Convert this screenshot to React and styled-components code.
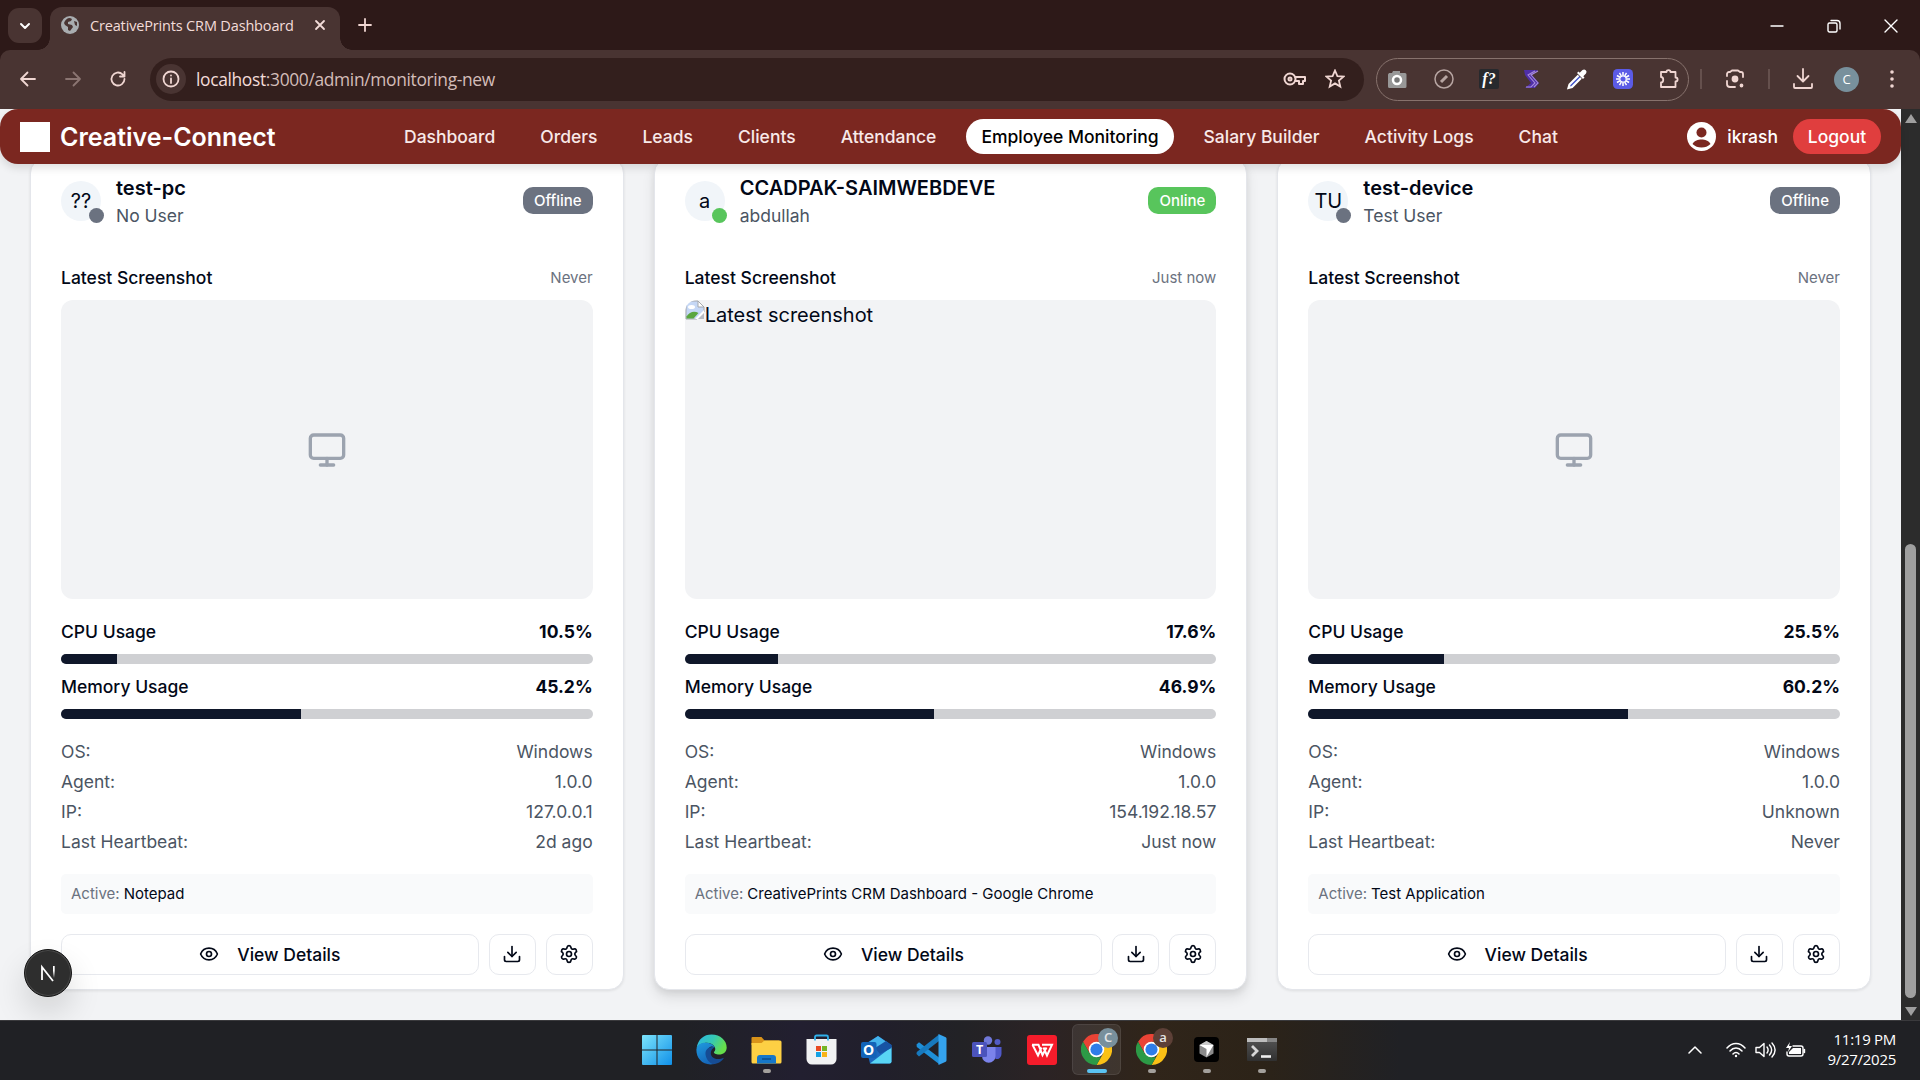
import React from 'react';
import styled, { createGlobalStyle } from 'styled-components';
import { Eye, Download, Settings, Monitor } from 'lucide-react';

const Global = createGlobalStyle`
  * { box-sizing: border-box; }
  html, body { margin: 0; padding: 0; overflow: hidden; background: #202125; }
  body { font-family: Inter, "Noto Sans", sans-serif; }
  svg { display: block; flex: none; }
`;

const Screen = styled.div`
  width: 1920px; height: 1080px; display: flex; flex-direction: column; overflow: hidden;
`;

/* ---------- browser chrome ---------- */
const TabStrip = styled.div`
  height: 50px; background: #2d1918; display: flex; align-items: flex-end; padding-left: 8px;
  font-family: "Open Sans", "Noto Sans", sans-serif;
`;
const TabSearch = styled.div`
  width: 34px; height: 35px; margin-bottom: 7px; border-radius: 11px; background: #493432;
  display: flex; align-items: center; justify-content: center;
`;
const Tab = styled.div`
  position: relative; width: 290px; height: 43px; margin-left: 8px; border-radius: 12px 12px 0 0; background: #493432;
  display: flex; align-items: center; padding: 0 14px 7px 11px;
  &::before, &::after {
    content: ""; position: absolute; bottom: 0; width: 12px; height: 12px;
  }
  &::before { left: -12px; background: radial-gradient(circle at 0 0, transparent 11.5px, #493432 12px); }
  &::after { right: -12px; background: radial-gradient(circle at 100% 0, transparent 11.5px, #493432 12px); }
`;
const TabTitle = styled.span`
  flex: 1; margin-left: 11px; font-size: 14.5px; letter-spacing: -0.16px; color: #f3dcd9; white-space: nowrap; padding-top: 1px;
`;
const NewTab = styled.div`
  height: 50px; display: flex; align-items: center; margin-left: 18px;
`;
const WindowButtons = styled.div`
  margin-left: auto; height: 49px; display: flex; align-items: center; gap: 43px; padding-right: 22px;
`;
const Toolbar = styled.div`
  height: 59px; background: #493432; border-radius: 10px 10px 0 0; display: flex; align-items: center; padding: 0 13px 1px 18px;
  font-family: "Open Sans", "Noto Sans", sans-serif;
`;
const ToolbarWrap = styled.div`
  background: #2d1918;
`;
const NavIcons = styled.div`
  display: flex; gap: 25px; width: 132px;
`;
const Address = styled.div`
  width: 1214px; height: 43px; border-radius: 22px; background: #331f1d; display: flex; align-items: center; padding: 0 19px 0 6px;
`;
const SiteInfo = styled.div`
  width: 30px; height: 30px; border-radius: 50%; background: #493432; display: flex; align-items: center; justify-content: center;
`;
const Url = styled.div`
  flex: 1; margin-left: 10px; font-size: 17.4px; letter-spacing: -0.34px; color: #d3bdb9; white-space: nowrap; padding-bottom: 1px;
  b { font-weight: 400; color: #f3dcd9; }
`;
const AddressIcons = styled.div`display: flex; gap: 18px; align-items: center;`;
const Extensions = styled.div`
  width: 313px; height: 43px; margin-left: 12px; border: 1.5px solid #87726d; border-radius: 22px;
  display: flex; align-items: center; justify-content: space-between; padding: 0 8px 0 8px;
`;
const Divider = styled.div`
  width: 2px; height: 20px; background: #65504d; margin: 0 ${p => p.$r}px 0 ${p => p.$l}px;
`;
const Profile = styled.div`
  width: 25px; height: 25px; margin: 0 30px 0 20px; border-radius: 50%; background: #78909c; color: #fff;
  display: flex; align-items: center; justify-content: center; font-size: 13px;
`;

/* ---------- page ---------- */
const Viewport = styled.div`
  height: 911px; display: flex; background: #f2f3f5; overflow: hidden; position: relative;
`;
const Page = styled.div`
  width: 1901px; display: flex; flex-direction: column;
`;
const Header = styled.header`
  position: relative; z-index: 2; flex: none; height: 55px; background: #7b2720; border-radius: 18px;
  box-shadow: 0 4px 8px rgba(0,0,0,.12); display: flex; align-items: center; padding: 0 20px;
`;
const Logo = styled.div`width: 30px; height: 30px; background: #fff;`;
const Brand = styled.div`
  margin-left: 10px; width: 329px; font-size: 25px; font-weight: 600; color: #fff; white-space: nowrap;
`;
const Menu = styled.nav`display: flex; gap: 15px;`;
const MenuItem = styled.a`
  height: 35px; padding: 0 15px; border-radius: 18px; display: flex; align-items: center; font-size: 17.5px; font-weight: 500;
  white-space: nowrap; background: ${p => (p.$active ? '#fff' : 'transparent')}; color: ${p => (p.$active ? '#000' : '#f8e9e8')};
`;
const UserName = styled.span`margin: 0 15px 0 11px; color: #fff; font-size: 17.5px; font-weight: 500;`;
const UserArea = styled.div`margin-left: auto; display: flex; align-items: center;`;
const Logout = styled.button`
  border: 0; height: 35px; width: 88px; border-radius: 18px; background: #e03e3e; color: #fff; font: 500 17.5px Inter, sans-serif; padding: 0;
`;
const Cards = styled.main`
  display: grid; grid-template-columns: repeat(3, 593.67px); gap: 30px; padding: 0 0 0 30px; margin-top: -6px;
`;
const Card = styled.section`
  height: 832px; background: #fff; border: 1px solid #e4e6eb; border-radius: 15px; padding: 14px 30px 0;
  box-shadow: ${p => (p.$raised ? '0 8px 14px rgba(0,0,0,.09), 0 3px 6px rgba(0,0,0,.07)' : '0 1px 3px rgba(0,0,0,.09)')};
`;
const CardHead = styled.div`display: flex; align-items: center; height: 55px;`;
const Avatar = styled.div`
  position: relative; width: 40px; height: 40px; border-radius: 50%; background: #f1f5f9; color: #020817;
  display: flex; align-items: center; justify-content: center; font-size: 20px;
`;
const StatusDot = styled.i`
  position: absolute; right: -2.5px; bottom: -2.5px; width: 15px; height: 15px; border-radius: 50%;
  background: ${p => (p.$online ? '#58c55c' : '#6b7280')};
`;
const Names = styled.div`flex: 1; margin-left: 15px;`;
const Device = styled.div`font-size: 20px; font-weight: 600; line-height: 30px; color: #020817;`;
const Owner = styled.div`font-size: 17.5px; line-height: 25px; color: #4b5563;`;
const Badge = styled.div`
  height: 27px; padding: 0 11px; border-radius: 10px; display: flex; align-items: center; font-size: 15px; font-weight: 500;
  color: #fff; background: ${p => (p.$online ? '#58c55c' : '#6b7280')};
`;
const Line = styled.div`
  display: flex; justify-content: space-between; align-items: center; height: 25px; font-size: 17.5px;
  font-weight: 500; color: #020817;
`;
const ShotHead = styled(Line)`margin-top: 37.4px;`;
const Ago = styled.span`font-size: 15px; font-weight: 400; color: #6b7280;`;
const Shot = styled.div`
  height: 298.6px; margin-top: 10px; border-radius: 12px; background: #f2f3f5; overflow: hidden; display: flex;
  align-items: ${p => (p.$empty ? 'center' : 'flex-start')}; justify-content: ${p => (p.$empty ? 'center' : 'flex-start')};
  font-size: 20px; line-height: 30px; color: #020817;
`;
const Metrics = styled.div`margin-top: 20px;`;
const Strong = styled.span`font-weight: 700;`;
const Track = styled.div`
  height: 10px; margin: 10px 0; border-radius: 5px; background: #cfd0d3; overflow: hidden;
`;
const Fill = styled.div`height: 10px; background: #0f172a;`;
const Facts = styled.div`margin-top: 17.5px; height: 120px;`;
const Fact = styled(Line)`height: 30px; font-weight: 400; color: #4b5563;`;
const Active = styled.div`
  height: 40px; margin-top: 17.5px; padding: 0 10px; border-radius: 5px; background: #f9fafb; display: flex; align-items: center;
  gap: 4px; font-size: 15px; color: #6b7280;
  span { color: #020817; }
`;
const Actions = styled.div`display: flex; gap: 10px; margin-top: 20px; color: #020817;`;
const Button = styled.button`
  flex: ${p => (p.$wide ? '1' : '0 0 47px')}; height: 41px; border: 1.5px solid #e7e9ee; border-radius: 10px; background: #fff;
  display: flex; align-items: center; justify-content: center; gap: 18px; padding: 0; color: #020817; font: 500 17.5px Inter, sans-serif;
`;
const DevBadge = styled.div`
  position: absolute; z-index: 3; left: 23.5px; top: 840px; width: 48px; height: 48px; border-radius: 50%; background: #2e2e2e;
  border: 1px solid #151515; box-shadow: inset 0 0 0 1px #4a4a4a, 0 16px 32px rgba(0,0,0,.14);
  display: flex; align-items: center; justify-content: center;
`;
const Scrollbar = styled.div`
  width: 19px; background: #2c2c2c; display: flex; flex-direction: column; align-items: center; padding: 5px 0 4px;
`;
const Thumb = styled.div`width: 11px; height: 454px; border-radius: 6px; background: #9f9f9f; margin: auto 0 8px;`;

/* ---------- taskbar ---------- */
const Taskbar = styled.footer`
  position: relative; height: 60px; border-top: 1px solid #3a3a3d; display: flex; align-items: center; padding: 0 0 2px 632px;
  background: linear-gradient(90deg, #202125 0, #202125 680px, #221f30 800px, #211f2b 880px, #222226 960px, #2b2325 1040px, #30251a 1150px, #2c2318 1260px, #202125 1400px);
  font-family: "Open Sans", "Noto Sans", sans-serif;
`;
const TaskItem = styled.div`
  position: relative; width: 49px; height: 51px; margin-right: 6px; border-radius: 6px; display: flex; align-items: center; justify-content: center;
  background: ${p => (p.$on ? 'rgba(255,255,255,.08)' : 'transparent')};
  box-shadow: ${p => (p.$on ? 'inset 0 0 0 1px rgba(255,255,255,.08)' : 'none')};
  &::after {
    content: ""; position: absolute; bottom: 2px; height: 4px; border-radius: 2px;
    width: ${p => (p.$on ? 20 : p.$run ? 8 : 0)}px; background: ${p => (p.$on ? '#5ac3f2' : '#a3a09c')};
  }
`;
const AccountDot = styled.i`
  position: absolute; top: 4px; right: 3px; width: 20px; height: 20px; border-radius: 50%; background: ${p => p.$c};
  color: #e5e5e5; font: normal 600 13px/19px "Open Sans", sans-serif; text-align: center;
`;
const Tray = styled.div`margin-left: auto; display: flex; align-items: center; padding-right: 24px;`;
const TrayIcons = styled.div`display: flex; align-items: center; gap: 9px; margin: 0 19px 0 24px;`;
const Clock = styled.div`
  color: #fff; font-size: 15px; line-height: 20px; letter-spacing: -0.28px; white-space: nowrap; width: 71px;
  display: flex; flex-direction: column; align-items: flex-end; padding-bottom: 2px;
`;

const S = ({ w = 20, h, v, children, c = '#f0d6d2', s = 2, fill = 'none' }) => (
  <svg width={w} height={h || w} viewBox={v || `0 0 ${w} ${h || w}`} fill={fill} stroke={fill === 'none' ? c : 'none'}
    strokeWidth={s} strokeLinecap="round" strokeLinejoin="round">{children}</svg>
);

const ChromeLogo = () => (
  <svg width="31" height="31" viewBox="0 0 48 48">
    <path d="M24 12h20.800A24 24 0 0 1 24 48l10.400-18z" fill="#fbc116" />
    <path d="M3.200 12A24 24 0 0 1 44.800 12H24L13.600 30z" fill="#ea4335" />
    <path d="M3.200 12 13.600 30 24 36h6.900L24 48A24 24 0 0 1 3.200 12z" fill="#2c9a46" />
    <circle cx="24" cy="24" r="12" fill="#fff" /><circle cx="24" cy="24" r="9.400" fill="#2f7de9" />
  </svg>
);

const Apps = () => (
  <>
    <TaskItem>
      <svg width="30" height="30" viewBox="0 0 30 30">
        <defs><linearGradient id="wi" x1="0" y1="0" x2="1" y2="1"><stop offset="0" stopColor="#7ce4fb" /><stop offset="1" stopColor="#1090e8" /></linearGradient></defs>
        <path d="M1 0h13.5v14.5H0V1a1 1 0 0 1 1-1zM15.5 0H29a1 1 0 0 1 1 1v13.5H15.5zM0 15.5h14.5V30H1a1 1 0 0 1-1-1zM15.5 15.5H30V29a1 1 0 0 1-1 1H15.5z" fill="url(#wi)" />
      </svg>
    </TaskItem>
    <TaskItem>
      <svg width="31" height="31" viewBox="0 0 31 31">
        <defs>
          <linearGradient id="e1" x1="0" y1="0" x2="1" y2=".4"><stop offset="0" stopColor="#2cb6e8" /><stop offset=".55" stopColor="#35c8b4" /><stop offset="1" stopColor="#66df4b" /></linearGradient>
          <linearGradient id="e2" x1="0" y1="0" x2=".5" y2="1"><stop offset="0" stopColor="#1f9be0" /><stop offset="1" stopColor="#1565b8" /></linearGradient>
        </defs>
        <path d="M.6 14C2 5 8 .4 15.600.4 24.500.4 30.700 6.500 30.700 13.500c0 4.500-3.500 7-7.500 7-3.500 0-5.700-1.200-5.200-2.500 1.600-1.600 1.500-3.500.7-5C17 9.800 13 8.500 9.500 8.800 5 9.300 2 11.500.6 14z" fill="url(#e1)" />
        <path d="M.4 15.500C1 11 5 8.600 9.500 8.800c4.500 0 8 2 9.300 4.500-4-2-7.500.3-7.300 5.200.2 5 4.500 9 9.500 9.500-1.700 1.500-4 2.400-6.500 2.400C6 30.300.200 24 .4 15.500z" fill="url(#e2)" />
        <path d="M18.800 13.300c-5-1.500-9.800 1.500-9.300 7 .5 4.500 3.500 8.500 7.500 10 5-.4 9-3 11-6.500-8 3.500-14.500-.5-13-6 .5-2 2-3.700 3.800-4.500z" fill="#164c94" />
      </svg>
    </TaskItem>
    <TaskItem $run>
      <svg width="31" height="28" viewBox="0 0 31 28">
        <path d="M1.500 1h9l3 3.500H28V9H.500V2a1 1 0 0 1 1-1z" fill="#d9931a" />
        <path d="M.500 7h10l3-2.500H29a1.500 1.500 0 0 1 1.500 1.500v20a1.500 1.500 0 0 1-1.500 1.500H2A1.500 1.500 0 0 1 .500 26z" fill="#fdd044" />
        <path d="M6 27.500V22a3 3 0 0 1 3-3h13a3 3 0 0 1 3 3v5.500z" fill="#1677c9" /><path d="M11 23h9" stroke="#0b4d8d" strokeWidth="1.500" />
      </svg>
    </TaskItem>
    <TaskItem>
      <svg width="31" height="31" viewBox="0 0 31 31">
        <path d="M9 6V3a1.500 1.500 0 0 1 1.500-1.500h10A1.500 1.500 0 0 1 22 3v3" fill="none" stroke="#2fb0ea" strokeWidth="1.800" />
        <path d="M.500 5h30v20a5.500 5.500 0 0 1-5.500 5.500H6A5.500 5.500 0 0 1 .500 25z" fill="#f1f2f3" />
        <path d="M9 5v1.500h13V5" fill="none" stroke="#2fb0ea" strokeWidth="1.800" strokeDasharray="1.500 13 1.500" />
        <path d="M10 12h5v5h-5z" fill="#e84a22" /><path d="M16 12h5v5h-5z" fill="#75b524" /><path d="M10 18h5v5h-5z" fill="#16a2e4" /><path d="M16 18h5v5h-5z" fill="#f8b418" />
      </svg>
    </TaskItem>
    <TaskItem>
      <svg width="31" height="28" viewBox="0 0 31 28">
        <path d="M4 8 17 0l13.500 9v16.500a2 2 0 0 1-2 2H9z" fill="#1b68be" /><path d="M8 6 17 0l10 7-16 8z" fill="#43b3ec" />
        <path d="M30.500 11v14.500a2 2 0 0 1-2 2H9z" fill="#59d5f5" /><path d="M14 12 25 5l5.500 4v3L19 18z" fill="#1753a4" />
        <rect x="0" y="6" width="15.500" height="16" rx="2" fill="#1263b8" />
        <text x="7.700" y="19" textAnchor="middle" fontSize="14" fontWeight="700" fill="#fff" fontFamily="Open Sans, sans-serif">O</text>
      </svg>
    </TaskItem>
    <TaskItem>
      <svg width="31" height="31" viewBox="0 0 31 31">
        <path d="M.500 10.500 3 8.300l20 15.200v6.500L.800 13z" fill="#1e8fd8" /><path d="M.500 20 3 22.400 23 7V.500L.800 18z" fill="#1779be" />
        <path d="m22.500 0 7.200 3.300a1.500 1.500 0 0 1 .8 1.200v22a1.500 1.500 0 0 1-.8 1.200l-7.200 3.300z" fill="#34a3ee" />
      </svg>
    </TaskItem>
    <TaskItem>
      <svg width="30" height="27" viewBox="0 0 30 27">
        <circle cx="16" cy="4.500" r="4.200" fill="#7078d8" /><circle cx="25.500" cy="6" r="3" fill="#525bc4" />
        <path d="M20 11h9.500v7a5 5 0 0 1-6 5z" fill="#5059c9" /><path d="M10 11h13.500v9a6.700 6.700 0 0 1-13.500 0z" fill="#7b83eb" />
        <rect y="6" width="15" height="15" rx="1.500" fill="#4b53bc" />
        <text x="7.500" y="18" textAnchor="middle" fontSize="12.500" fontWeight="700" fill="#fff" fontFamily="Open Sans, sans-serif">T</text>
      </svg>
    </TaskItem>
    <TaskItem>
      <svg width="30" height="30" viewBox="0 0 30 30"><rect width="30" height="30" rx="3" fill="#f51c2b" />
        <path d="M5 9.800h6.500L15.500 20l4-7.500M5.500 9.800 11 20.500l3.500-8M15 9.800h10L20 20.500l-3.500-8" fill="none" stroke="#fff" strokeWidth="2" /></svg>
    </TaskItem>
    <TaskItem $on><ChromeLogo /><AccountDot $c="#78909c">C</AccountDot></TaskItem>
    <TaskItem $run><ChromeLogo /><AccountDot $c="#5d4037">a</AccountDot></TaskItem>
    <TaskItem $run>
      <svg width="25" height="25" viewBox="0 0 25 25"><rect width="25" height="25" rx="4" fill="#000" />
        <path d="m12.500 4 7 4v8.500l-7 4-7-4V8z" fill="#8b8b8b" /><path d="m5.500 8 7-4 7 4-7 3z" fill="#c9c9c9" /><path d="M5.500 8h14l-7 12v-8z" fill="#fff" /></svg>
    </TaskItem>
    <TaskItem $run>
      <svg width="30" height="23" viewBox="0 0 30 23"><defs><linearGradient id="tm" x1="0" y1="0" x2="0" y2="1"><stop offset="0" stopColor="#555" /><stop offset="1" stopColor="#303030" /></linearGradient></defs>
        <rect width="30" height="23" rx="1" fill="url(#tm)" /><path d="M0 0h20v4H0z" fill="#bdbdbd" /><path d="M20 0h10v4H20z" fill="#858585" />
        <path d="m5 8 5 5-5 5" fill="none" stroke="#d6d6d6" strokeWidth="2.800" /><path d="M14 18.500h10" stroke="#eee" strokeWidth="2.600" /></svg>
    </TaskItem>
  </>
);

const devices = [
  { name: 'test-pc', user: 'No User', initials: '??', ago: 'Never', cpu: 10.5, mem: 45.2, ip: '127.0.0.1', beat: '2d ago', active: 'Notepad' },
  { name: 'CCADPAK-SAIMWEBDEVE', user: 'abdullah', initials: 'a', online: true, ago: 'Just now', cpu: 17.6, mem: 46.9, ip: '154.192.18.57', beat: 'Just now', active: 'CreativePrints CRM Dashboard - Google Chrome' },
  { name: 'test-device', user: 'Test User', initials: 'TU', ago: 'Never', cpu: 25.5, mem: 60.2, ip: 'Unknown', beat: 'Never', active: 'Test Application' },
];

const BrokenImage = () => (
  <svg width="20" height="20" viewBox="0 0 20 20">
    <path d="M1 1h12l6 6v5L12 19H1z" fill="#c5d7f5" stroke="#a5a8ad" />
    <path d="M13 1v6h6z" fill="#fff" stroke="#a5a8ad" /><ellipse cx="6.500" cy="7" rx="3.500" ry="2" fill="#fff" />
    <path d="M1.500 18.500v-2c3-5 8-6 12-3.500l-5 5.500z" fill="#5aa63f" /><path d="m10 19 9-9v3l-6 6z" fill="#fff" /><path d="M19 13v6h-6z" fill="#b9bcc4" />
  </svg>
);

const DeviceCard = ({ d }) => (
  <Card $raised={d.online}>
    <CardHead>
      <Avatar>{d.initials}<StatusDot $online={d.online} /></Avatar>
      <Names><Device>{d.name}</Device><Owner>{d.user}</Owner></Names>
      <Badge $online={d.online}>{d.online ? 'Online' : 'Offline'}</Badge>
    </CardHead>
    <ShotHead>Latest Screenshot<Ago>{d.ago}</Ago></ShotHead>
    <Shot $empty={!d.online}>
      {d.online ? <><BrokenImage /><span>Latest screenshot</span></> : <Monitor size={40} color="#9ca3af" />}
    </Shot>
    <Metrics>
      <Line>CPU Usage<Strong>{d.cpu}%</Strong></Line>
      <Track><Fill style={{ width: `${d.cpu}%` }} /></Track>
      <Line>Memory Usage<Strong>{d.mem}%</Strong></Line>
      <Track><Fill style={{ width: `${d.mem}%` }} /></Track>
    </Metrics>
    <Facts>
      <Fact>OS:<span>Windows</span></Fact>
      <Fact>Agent:<span>1.0.0</span></Fact>
      <Fact>IP:<span>{d.ip}</span></Fact>
      <Fact>Last Heartbeat:<span>{d.beat}</span></Fact>
    </Facts>
    <Active>Active: <span>{d.active}</span></Active>
    <Actions>
      <Button $wide><Eye size={20} />View Details</Button>
      <Button><Download size={20} /></Button>
      <Button><Settings size={20} /></Button>
    </Actions>
  </Card>
);

const menu = ['Dashboard', 'Orders', 'Leads', 'Clients', 'Attendance', 'Employee Monitoring', 'Salary Builder', 'Activity Logs', 'Chat'];

export default function App() {
  return (
    <Screen>
      <Global />
      <TabStrip>
        <TabSearch><S w={12} h={8} c="#fff"><path d="m2 2 4 4 4-4" /></S></TabSearch>
        <Tab>
          <svg width="18" height="18" viewBox="0 0 18 18"><circle cx="9" cy="9" r="9" fill="#a9adb0" />
            <path d="M3 7c1-3 3-5 6-5l2 1-1 2-3 1v2l4 1 1 2-3 4-2-1v-3L4 9zM13 5l3 1v4l-2-1z" fill="#493432" /></svg>
          <TabTitle>CreativePrints CRM Dashboard</TabTitle>
          <S w={12} c="#f3dcd9" s={1.8}><path d="m2 2 8 8M10 2l-8 8" /></S>
        </Tab>
        <NewTab><S w={14} s={1.8}><path d="M7 1v12M1 7h12" /></S></NewTab>
        <WindowButtons>
          <S w={14} c="#fff" s={1.4}><path d="M1 7h12" /></S>
          <S w={14} c="#fff" s={1.4}><rect x="1" y="4" width="9" height="9" rx="1.500" /><path d="M4 1.500h6a3 3 0 0 1 3 3V10" /></S>
          <S w={14} c="#fff" s={1.4}><path d="m1 1 12 12M13 1 1 13" /></S>
        </WindowButtons>
      </TabStrip>
      <ToolbarWrap>
        <Toolbar>
          <NavIcons>
            <S s={1.8}><path d="M17 10H3M9.500 3.500 3 10l6.500 6.500" /></S>
            <S s={1.8} c="#8b7572"><path d="M3 10h14M10.500 3.500 17 10l-6.500 6.500" /></S>
            <S s={1.8}><path d="M16.500 10A6.500 6.500 0 1 1 14.500 5.300L16.500 7.500M16.500 3v4.500h-4.500" /></S>
          </NavIcons>
          <Address>
            <SiteInfo><S w={18} s={1.800}><circle cx="9" cy="9" r="7.500" /><path d="M9 8.500V13M9 5.500v.1" /></S></SiteInfo>
            <Url><b>localhost</b>:3000/admin/monitoring-new</Url>
            <AddressIcons>
              <S w={24} h={16}><circle cx="7" cy="8" r="5.500" /><circle cx="7" cy="8" r="1.500" /><path d="M12.200 6H22v4h-2v3h-4v-3h-3.800" /></S>
              <S w={20} s={1.800}><path d="m10 1.500 2.400 5.600 6.100.5-4.600 4 1.400 6L10 14.400l-5.300 3.200 1.400-6-4.600-4 6.100-.5z" strokeLinejoin="miter" /></S>
            </AddressIcons>
          </Address>
          <Extensions>
            <svg width="24" height="20" viewBox="0 0 24 20"><path d="M4 4h3l1-2h7v2h5a1.500 1.500 0 0 1 1.500 1.500v12a1.500 1.500 0 0 1-1.500 1.500H4.500A1.500 1.500 0 0 1 3 17.500V5.500z" fill="#989898" /><circle cx="12" cy="11" r="4" fill="#777" stroke="#fff" strokeWidth="2.500" /></svg>
            <S w={20} c="#b7a5a2" s={1.500}><circle cx="10" cy="10" r="9" /><path d="m7 13 6-6" strokeWidth="3" strokeLinecap="butt" /></S>
            <svg width="20" height="20" viewBox="0 0 20 20"><rect width="20" height="20" rx="2" fill="#27292d" /><text x="10" y="15" fill="#fff" textAnchor="middle" fontSize="16" fontStyle="italic" fontWeight="700" fontFamily="Liberation Serif, serif">f?</text></svg>
            <svg width="18" height="20" viewBox="0 0 18 20"><path d="M1 1h14L9 6l7 8-4 5H2l6-5-6-8z" fill="#4e2fa8" /><path d="M15 2 8 6l7 8-4 4M12 2 5 6l7 8-4 4H3" fill="none" stroke="#a78bda" strokeWidth="1.100" /></svg>
            <svg width="22" height="22" viewBox="0 0 22 22"><path d="m12.500 7.500-9 9-1 3.500 3.500-1 9-9" fill="#3f51c9" stroke="#fff" strokeWidth="2.200" /><path d="m11 5 6 6 1.500-1.500-1.200-1.200L20 5.500a2.500 2.500 0 0 0-3.500-3.500l-2.800 2.700-1.200-1.200z" fill="#fff" /></svg>
            <svg width="20" height="20" viewBox="0 0 20 20"><rect width="20" height="20" rx="4.500" fill="#5b5be6" />
              {Array.from({ length: 12 }, (_, i) => <path key={i} d="M10 3v3.500" stroke="#fff" strokeWidth="1.500" transform={`rotate(${i * 30} 10 10)`} />)}
              <circle cx="10" cy="10" r="3.200" fill="none" stroke="#fff" strokeWidth="1.200" /></svg>
            <S w={22} s={1.8}><path d="M3 4h5.500c0-2.600 4-2.600 4 0H17.500v5.500c2.800 0 2.800 4 0 4V19H3v-4.500c3 0 3-5.500 0-5.500z" /></S>
          </Extensions>
          <Divider $l={11} $r={23} />
          <S w={20} s={1.8}><path d="M2 7V5a2 2 0 0 1 2-2h1l2-1.500h6L15 3h1a2 2 0 0 1 2 2v3M2 12v3a3 3 0 0 0 3 3h5" /><circle cx="10" cy="10" r="2.500" fill="#f0d6d2" /><circle cx="16.500" cy="16.500" r="1" fill="#f0d6d2" /></S>
          <Divider $l={23} $r={22} />
          <S w={22} s={1.8}><path d="M11 1v12M5.500 8l5.500 5.500L16.500 8M2 16v3a1 1 0 0 0 1 1h16a1 1 0 0 0 1-1v-3" /></S>
          <Profile>C</Profile>
          <S w={6} h={20} fill="#f0d6d2"><circle cx="3" cy="3" r="1.800" /><circle cx="3" cy="10" r="1.800" /><circle cx="3" cy="17" r="1.800" /></S>
        </Toolbar>
      </ToolbarWrap>
      <Viewport>
        <Page>
          <Header>
            <Logo />
            <Brand>Creative-Connect</Brand>
            <Menu>{menu.map(m => <MenuItem key={m} $active={m === 'Employee Monitoring'}>{m}</MenuItem>)}</Menu>
            <UserArea>
              <svg width="29" height="29" viewBox="0 0 29 29"><circle cx="14.500" cy="14.500" r="14.500" fill="#fff" /><circle cx="14.500" cy="10.500" r="5" fill="#7b2720" /><path d="M5.500 22c2-3.500 5.500-4.500 9-4.500s7 1 9 4.500c-2.500 2.500-5.500 3.500-9 3.500S8 24.500 5.500 22z" fill="#7b2720" /></svg>
              <UserName>ikrash</UserName>
              <Logout>Logout</Logout>
            </UserArea>
          </Header>
          <Cards>{devices.map(d => <DeviceCard key={d.name} d={d} />)}</Cards>
        </Page>
        <Scrollbar>
          <S w={12} h={10} fill="#9f9f9f"><path d="M6 0 12 9H0z" /></S>
          <Thumb />
          <S w={12} h={10} fill="#9f9f9f"><path d="M0 1h12L6 10z" /></S>
        </Scrollbar>
        <DevBadge>
          <svg width="18" height="18" viewBox="0 0 18 18"><defs><linearGradient id="nx" x1="0" y1="0" x2="0" y2="1"><stop offset=".4" stopColor="#fff" /><stop offset="1" stopColor="#fff" stopOpacity="0" /></linearGradient></defs>
            <path d="M3 16V3l11 14" fill="none" stroke="#fff" strokeWidth="1.800" /><path d="M14 2h1.700v12H14z" fill="url(#nx)" /></svg>
        </DevBadge>
      </Viewport>
      <Taskbar>
        <Apps />
        <Tray>
          <S w={14} h={9} c="#fff" s={1.500}><path d="m1 8 6-6 6 6" /></S>
          <TrayIcons>
            <S w={20} h={16} c="#fff" s={1.500}><path d="M1 6c5-6 13-6 18 0M4 9c3.500-4 8.500-4 12 0M7 12c1.800-2 4.200-2 6 0" /><circle cx="10" cy="14" r="1.200" fill="#fff" stroke="none" /></S>
            <S w={21} h={18} c="#fff" s={1.400}><path d="M1 6.500h3.500L9 2.500v13l-4.500-4H1zM12 6c1.500 2 1.500 4 0 6M14.500 4c3 3.500 3 6.500 0 10M17 2c4 4.500 4 9.500 0 14" /></S>
            <S w={21} h={18} c="#fff" s={1.400}><path d="M8 5h8a2 2 0 0 1 2 2v6a2 2 0 0 1-2 2H4a2 2 0 0 1-2-2v-2M19.500 8.500v3" /><path d="M8 7h8v6H4v-2z" fill="#fff" stroke="none" /><path d="M5 1 1 7h3L3 11l4-6H4z" fill="#fff" stroke="none" /></S>
          </TrayIcons>
          <Clock><span>11:19 PM</span><span>9/27/2025</span></Clock>
        </Tray>
      </Taskbar>
    </Screen>
  );
}
